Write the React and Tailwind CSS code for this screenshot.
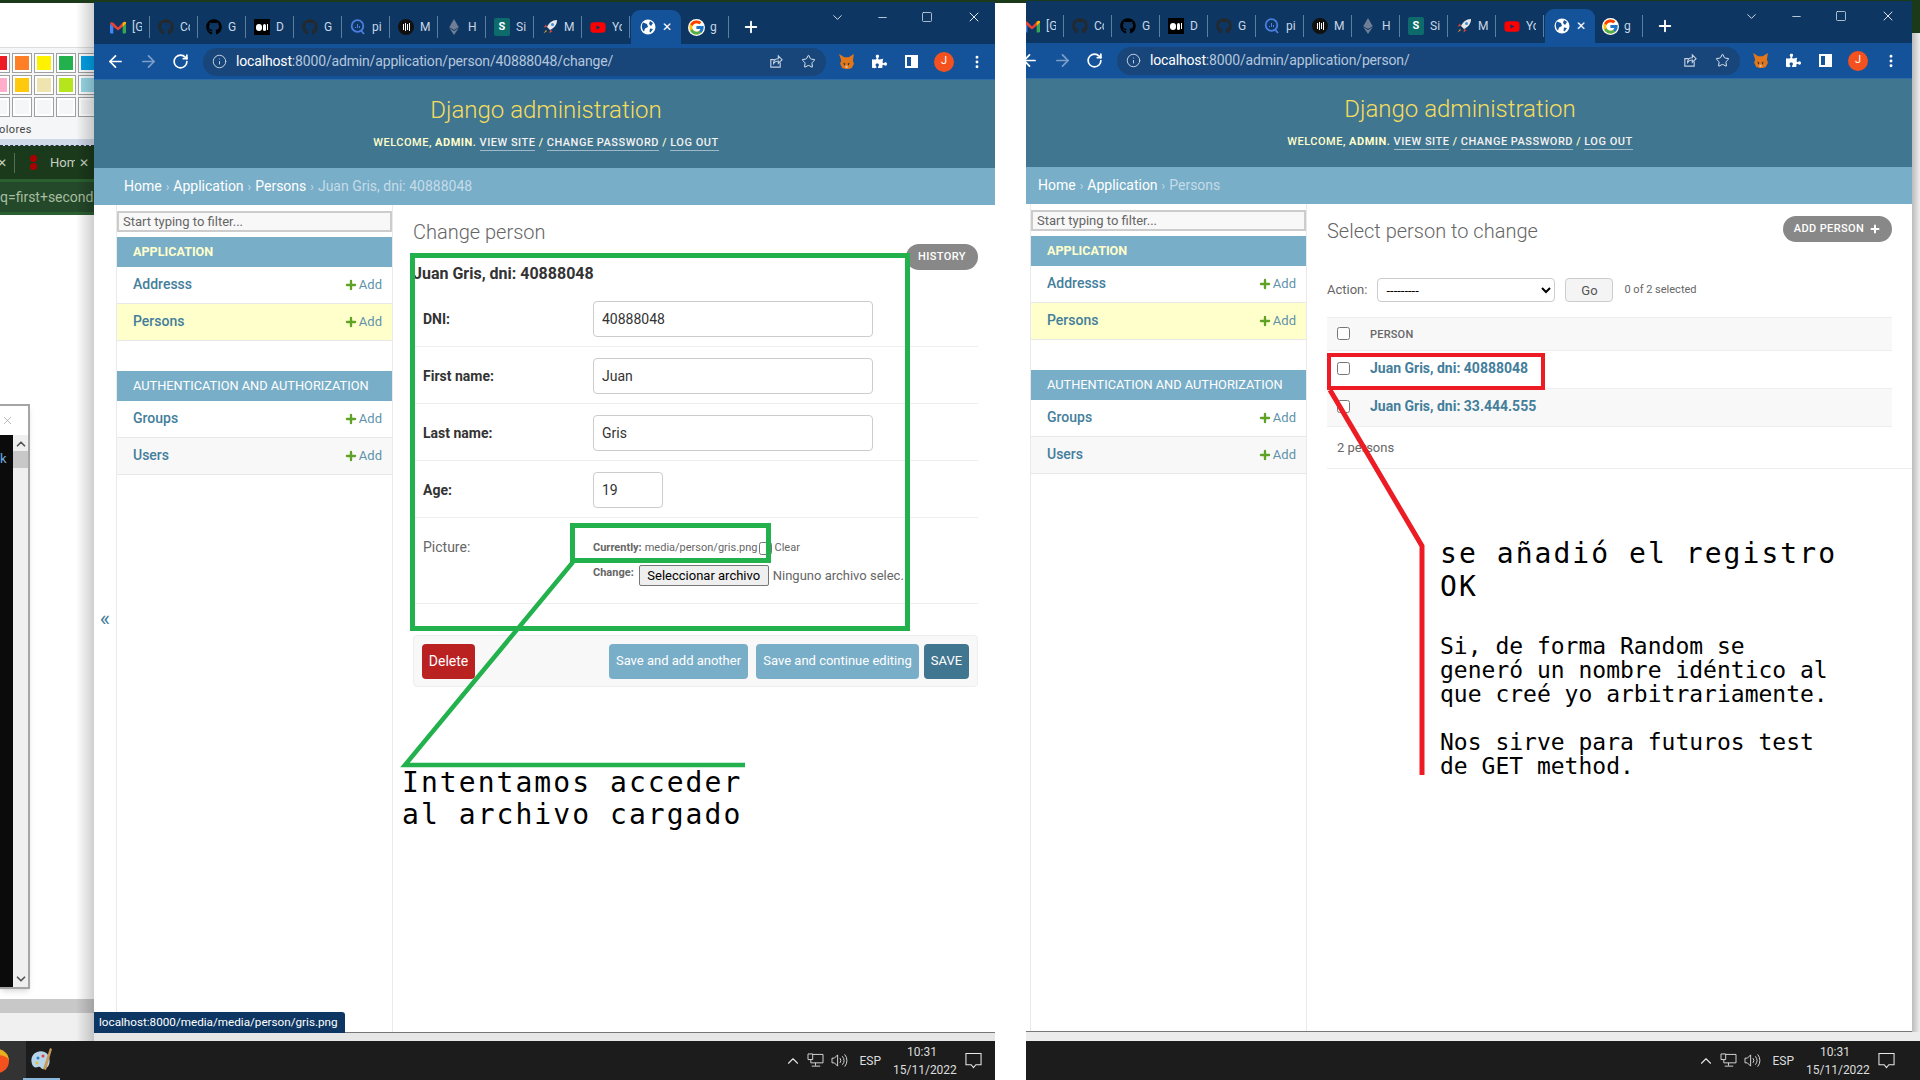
import React from "react";
import { FaGithub, FaEthereum, FaYoutube, FaPuzzlePiece } from "react-icons/fa";
import { FcGoogle } from "react-icons/fc";
import { ArrowLeft, ArrowRight, RotateCw, Info, Star, ChevronUp, ChevronDown, X, Minus, Square, Plus, MoreVertical } from "lucide-react";

const Gmail = () => (
  <svg viewBox="0 0 24 18" className="w-[16px] h-[13px]">
    <path d="M0 3v13a2 2 0 0 0 2 2h3V8z" fill="#4285f4" />
    <path d="M24 3v13a2 2 0 0 1-2 2h-3V8z" fill="#34a853" />
    <path d="M5 2 12 9l7-7 3-1.500a2 2 0 0 1 2 2.500l-5 5-7 5.500L5 8 0 3A2 2 0 0 1 2 1z" fill="#ea4335" />
    <path d="M19 2l3-1.500a2 2 0 0 1 2 2.500l-5 5z" fill="#fbbc04" />
  </svg>
);
const Medium = () => (
  <div className="w-[16px] h-[16px] bg-black flex items-center justify-center gap-[1px]">
    <span className="w-[6px] h-[7px] rounded-full bg-white" />
    <span className="w-[3px] h-[7px] rounded-full bg-white" />
    <span className="w-[1px] h-[6px] bg-white" />
  </div>
);
const Quant = () => (
  <svg viewBox="0 0 16 16" className="w-[16px] h-[16px]" fill="none" stroke="#4c7fe0" strokeWidth="1.800">
    <circle cx="7.500" cy="7" r="5.800" />
    <path d="M11 11.500l3 3.500" />
    <path d="M5.500 8v1M7.500 5v4M9.500 7v2" strokeWidth="1" />
  </svg>
);
const Bars = () => (
  <div className="w-[16px] h-[16px] rounded-full bg-[#111] flex items-center justify-center gap-[1px]">
    <span className="w-[1px] h-[6px] bg-white" />
    <span className="w-[1px] h-[8px] bg-white" />
    <span className="w-[1px] h-[6px] bg-white" />
    <span className="w-[1px] h-[8px] bg-white" />
  </div>
);
const Teal = () => (
  <div className="w-[16px] h-[18px] rounded-[2px] bg-[#0d6b6b] text-white text-[11px] font-bold flex items-center justify-center">S</div>
);
const Rocket = () => (
  <svg viewBox="0 0 16 16" className="w-[16px] h-[16px]">
    <path d="M15 1c-5 0-8 3-10 7l3 3c4-2 7-5 7-10z" fill="#e8e8e8" />
    <circle cx="10.500" cy="5.500" r="1.500" fill="#3a8fd8" />
    <path d="M5 8 1.500 8.500 4 5.500zM8 11l-.500 3.500 3-2.500z" fill="#e0453a" />
    <path d="M4 11l-2.500 3.500L5 12z" fill="#f5a623" />
  </svg>
);
const Globe = () => (
  <svg viewBox="0 0 16 16" className="w-[16px] h-[16px]">
    <circle cx="8" cy="8" r="7.500" fill="#fff" />
    <path d="M3 3.500 7 5l1 3-3 1.500-1 3A7 7 0 0 1 3 3.500zM10 2l3 2-2 3-2-2zM10 9.500l3 .500-2.500 3.500-1-1z" fill="#14539a" />
  </svg>
);
const GH = () => <FaGithub className="w-[16px] h-[16px] text-[#24292e]" />;
const GHB = () => <FaGithub className="w-[16px] h-[16px] text-black" />;
const tabs = [
  [<Gmail />, "[G"], [<GH />, "Cc"], [<GHB />, "G"], [<Medium />, "D"], [<GH />, "G"], [<Quant />, "pi"],
  [<Bars />, "M"], [<FaEthereum className="w-[16px] h-[16px] text-[#6f7d96]" />, "H"], [<Teal />, "Si"], [<Rocket />, "M"],
  [<FaYoutube className="w-[17px] h-[17px] text-[#ff0000]" />, "Yc"],
];

function TabStrip() {
  return (
    <div className="h-[42px] bg-[#0d3762] flex items-end relative shrink-0 pl-[8px]">
      {tabs.map(([icon, label], i) => (
        <div key={i} className="w-[48px] h-[34px] flex items-center pl-[8px] gap-[6px] text-[#c8d6e5] text-[12px] overflow-hidden border-r border-[#3f6589] my-0 shrink-0 [border-image:linear-gradient(transparent_20%,#5c7fa0_20%,#5c7fa0_80%,transparent_80%)_1]">
          <span className="w-[16px] h-[18px] flex items-center justify-center shrink-0">{icon}</span>
          <span className="w-[10px] overflow-hidden whitespace-nowrap">{label}</span>
        </div>
      ))}
      <div className="w-[50px] h-[34px] bg-[#14539a] rounded-t-[9px] flex items-center pl-[9px] gap-[6px] text-white text-[12px] shrink-0 ml-[1px]">
        <Globe />
        <span>✕</span>
      </div>
      <div className="w-[48px] h-[34px] flex items-center pl-[7px] gap-[5px] text-[#c8d6e5] text-[12px] shrink-0 border-r border-[#3f6589] [border-image:linear-gradient(transparent_20%,#5c7fa0_20%,#5c7fa0_80%,transparent_80%)_1]">
        <FcGoogle className="w-[17px] h-[17px] bg-white rounded-full shrink-0" />
        <span className="w-[10px] overflow-hidden">g</span>
      </div>
      <Plus className="w-[18px] h-[18px] text-white ml-[13px] mb-[8px]" strokeWidth={2.5} />
      <div className="ml-auto self-start flex items-center mt-[7px] text-[#dfe7ef]">
        <ChevronDown className="w-[15px] h-[15px] mr-[31px]" strokeWidth={1.5} />
        <Minus className="w-[13px] h-[13px] mr-[32px]" strokeWidth={1.5} />
        <Square className="w-[12px] h-[12px] mr-[33px]" strokeWidth={1.5} />
        <X className="w-[16px] h-[16px] mr-[16px]" strokeWidth={1.5} />
      </div>
    </div>
  );
}

function Toolbar({ path }) {
  return (
    <div className="h-[36px] bg-[#14539a] flex items-center shrink-0 border-b border-[#2f6aa8]">
      <ArrowLeft className="w-[19px] h-[19px] text-white ml-[12px]" strokeWidth={2.2} />
      <ArrowRight className="w-[19px] h-[19px] text-[#7d9fc8] ml-[14px]" strokeWidth={2.2} />
      <RotateCw className="w-[17px] h-[17px] text-white ml-[14px]" strokeWidth={2.4} />
      <div className="ml-[14px] w-[623px] h-[28px] rounded-[14px] bg-[#18467a] flex items-center pl-[9px] pr-[10px]">
        <Info className="w-[15px] h-[15px] text-[#c3d0df]" strokeWidth={1.6} />
        <span className="ml-[9px] text-[14px] text-white tracking-[-0.16px]">localhost</span>
        <span className="text-[14px] text-[#b4c6dc] tracking-[-0.16px]">{path}</span>
        <svg viewBox="0 0 16 16" className="w-[15px] h-[15px] ml-auto" fill="none" stroke="#c3d0df" strokeWidth="1.200">
          <path d="M13 9v5H3V6h4" />
          <path d="M6 10c0-3 2-5 5-5V2l4 4-4 4V7.500c-2 0-4 1-5 2.500z" />
        </svg>
        <Star className="w-[15px] h-[15px] text-[#dfe7ef] ml-[18px]" strokeWidth={1.6} />
      </div>
      <svg viewBox="0 0 16 16" className="w-[17px] h-[17px] ml-[12px]">
        <path d="M1 1l5 3h4l5-3-1 6 1 3-2 4-3 1H7l-3-1-2-4 1-3z" fill="#e2761b" />
        <path d="M5 9l2 1-1 2zM11 9l-2 1 1 2z" fill="#233447" />
        <path d="M7 12h2v2H7z" fill="#d7c1b3" />
      </svg>
      <FaPuzzlePiece className="w-[15px] h-[15px] text-white ml-[17px]" />
      <div className="w-[13px] h-[13px] border-[2px] border-white ml-[18px] flex justify-end"><span className="w-[5px] bg-white" /></div>
      <div className="w-[20px] h-[20px] rounded-full bg-[#f4511e] text-white text-[11px] flex items-center justify-center ml-[16px]">J</div>
      <MoreVertical className="w-[16px] h-[16px] text-white ml-[15px]" strokeWidth={2.4} />
    </div>
  );
}

function Header({ crumbs, last }) {
  return (
    <>
      <div className="h-[88px] bg-[#417690] shrink-0 flex flex-col items-center">
        <div className="mt-[15px] h-[30px] leading-[30px] text-[24px] font-light text-[#f5dd5d]">Django administration</div>
        <div className="mt-[11px] text-[11px] font-medium text-[#ffc] tracking-[0.5px] uppercase leading-[14px] whitespace-nowrap">
          Welcome, <strong className="font-bold">admin</strong>.{" "}
          <span className="text-[#f2f2f2] border-b border-[#9fb9c8] pb-[1px]">View site</span> /{" "}
          <span className="text-[#f2f2f2] border-b border-[#9fb9c8] pb-[1px]">Change password</span> /{" "}
          <span className="text-[#f2f2f2] border-b border-[#9fb9c8] pb-[1px]">Log out</span>
        </div>
      </div>
      <div className="h-[37px] bg-[#79aec8] shrink-0 flex items-center pl-[30px] text-[14px] text-white">
        {crumbs.map((c) => (
          <React.Fragment key={c}>
            <span>{c}</span>
            <span className="text-[#c4dce8] px-[4px] text-[12px]">›</span>
          </React.Fragment>
        ))}
        <span className="text-[#c4dce8]">{last}</span>
      </div>
    </>
  );
}

function SideRow({ name, active, alt }) {
  return (
    <div className={`h-[37px] border-b border-[#e8e8e8] flex items-center pl-[16px] pr-[10px] pb-[1px] text-[14px] ${active ? "bg-[#ffc]" : alt ? "bg-[#f8f8f8]" : "bg-white"}`}>
      <span className="font-medium text-[#447e9b]">{name}</span>
      <span className="ml-auto flex items-center text-[#5f93ab] text-[13px]">
        <Plus className="w-[14px] h-[14px] text-[#5fa225] mr-[1px]" strokeWidth={4} />
        Add
      </span>
    </div>
  );
}

function Sidebar() {
  return (
    <div className="w-[277px] shrink-0 border-x border-[#eaeaea] pt-[6px] self-stretch bg-white">
      <input readOnly defaultValue="Start typing to filter..." className="w-full h-[21px] bg-[#f8f8f8] border-2 border-[#ccc] pl-[4px] text-[13px] text-[#666] outline-none block" />
      <div className="mt-[5px] h-[30px] bg-[#79aec8] flex items-center pl-[16px] text-[12.600px] font-bold text-[#ffc]">APPLICATION</div>
      <SideRow name="Addresss" />
      <SideRow name="Persons" active />
      <div className="mt-[30px] h-[30px] bg-[#79aec8] flex items-center pl-[16px] text-[12.800px] text-white whitespace-nowrap">AUTHENTICATION AND AUTHORIZATION</div>
      <SideRow name="Groups" />
      <SideRow name="Users" alt />
    </div>
  );
}

function FormRow({ label, value, small }) {
  return (
    <div className="h-[57px] border-b border-[#eee] flex items-center pl-[10px] pt-[2px]">
      <span className="w-[170px] text-[14px] font-bold text-[#333]">{label}</span>
      <input readOnly defaultValue={value} className={`h-[36px] ${small ? "w-[70px]" : "w-[280px]"} border border-[#ccc] rounded-[4px] bg-white px-[8px] text-[14px] text-[#333] outline-none`} />
    </div>
  );
}

function Button({ children, className }) {
  return <div className={`h-[35px] rounded-[4px] text-white flex items-center justify-center ${className}`}>{children}</div>;
}

function ChangeMain() {
  return (
    <div className="flex-1 pl-[20px] pr-[20px] pt-[15px] min-w-0">
      <div className="h-[50px] flex justify-between">
        <h1 className="text-[20px] leading-[24px] font-light text-[#666]">Change person</h1>
        <div className="self-end h-[26px] w-[72px] rounded-[13px] bg-[#888] text-white text-[11px] font-medium tracking-[0.4px] flex items-center justify-center">HISTORY</div>
      </div>
      <div className="-mt-[8px] h-[28px] leading-[24px] text-[16px] font-bold text-[#333]">Juan Gris, dni: 40888048</div>
      <FormRow label="DNI:" value="40888048" />
      <FormRow label="First name:" value="Juan" />
      <FormRow label="Last name:" value="Gris" />
      <FormRow label="Age:" value="19" small />
      <div className="h-[86px] border-b border-[#eee] flex pl-[10px] pt-[20px]">
        <span className="w-[170px] text-[14px] leading-[18px] text-[#666]">Picture:</span>
        <div>
          <div className="h-[18px] mt-[1px] flex items-center text-[11px] text-[#666] whitespace-nowrap">
            <b className="font-bold mr-[3px]">Currently:</b>
            <span className="text-[#666]">media/person/gris.png</span>
            <input type="checkbox" readOnly className="ml-[2px] mr-[2px] m-0 w-[13px] h-[13px]" />
            <span className="text-[#666]">Clear</span>
          </div>
          <div className="mt-[8px] flex items-center whitespace-nowrap">
            <b className="text-[11px] font-bold text-[#666] mr-[5px] -mt-[4px]">Change:</b>
            <div className="h-[21px] w-[130px] border border-[#767676] rounded-[2px] bg-[#efefef] text-[13px] text-black flex items-center justify-center">Seleccionar archivo</div>
            <span className="ml-[4px] text-[13px] text-[#666]">Ninguno archivo selec.</span>
          </div>
        </div>
      </div>
      <div className="mt-[31px] h-[52px] border border-[#eee] rounded-[4px] bg-[#f8f8f8] flex items-center pl-[8px] pr-[8px]">
        <Button className="w-[53px] bg-[#ba2121] text-[14px]">Delete</Button>
        <Button className="w-[139px] bg-[#79aec8] text-[13px] ml-auto">Save and add another</Button>
        <Button className="w-[163px] bg-[#79aec8] text-[13px] ml-[8px]">Save and continue editing</Button>
        <Button className="w-[45px] bg-[#417690] text-[13px] ml-[5px]">SAVE</Button>
      </div>
    </div>
  );
}

function ListMain() {
  return (
    <div className="flex-1 pl-[20px] pr-[20px] pt-[12px] min-w-0">
      <div className="flex justify-between items-start h-[26px]">
        <h1 className="mt-[3px] text-[20px] leading-[24px] font-light text-[#666]">Select person to change</h1>
        <div className="h-[26px] w-[109px] rounded-[13px] bg-[#888] text-white text-[11px] font-medium tracking-[0.4px] flex items-center justify-center gap-[5px]">
          ADD PERSON <Plus className="w-[12px] h-[12px]" strokeWidth={4} />
        </div>
      </div>
      <div className="mt-[36px] h-[24px] flex items-center">
        <span className="text-[13px] text-[#666] mr-[10px]">Action:</span>
        <select className="w-[178px] h-[24px] border border-[#ccc] rounded-[4px] bg-white text-[13px] pl-[4px] text-black">
          <option>---------</option>
        </select>
        <div className="ml-[10px] w-[48px] h-[24px] rounded-[4px] border border-[#ccc] bg-[#f4f4f4] text-[13px] text-[#555] flex items-center justify-center pt-[2px]">Go</div>
        <span className="ml-[11px] text-[11px] text-[#666]">0 of 2 selected</span>
      </div>
      <div className="mt-[15px] h-[34px] bg-[#f8f8f8] border-y border-[#eee] flex items-center pl-[10px]">
        <input type="checkbox" readOnly className="m-0 w-[13px] h-[13px] mb-[2px]" />
        <span className="ml-[20px] text-[11px] font-medium text-[#666] tracking-[0.2px] mt-[2px]">PERSON</span>
      </div>
      <div className="h-[38px] border-b border-[#eee] flex items-center pl-[10px] pb-[2px]">
        <input type="checkbox" readOnly className="m-0 w-[13px] h-[13px]" />
        <span className="ml-[20px] text-[14px] font-bold text-[#447e9b]">Juan Gris, dni: 40888048</span>
      </div>
      <div className="h-[38px] bg-[#f8f8f8] border-b border-[#eee] flex items-center pl-[10px] pb-[2px]">
        <input type="checkbox" readOnly className="m-0 w-[13px] h-[13px]" />
        <span className="ml-[20px] text-[14px] font-bold text-[#447e9b]">Juan Gris, dni: 33.444.555</span>
      </div>
      <div className="h-[42px] border-b border-[#eee] flex items-center pl-[10px] text-[13px] text-[#666] mr-[-20px]">2 persons</div>
    </div>
  );
}

function Browser({ path, crumbs, last, children }) {
  return (
    <div className="w-[904px] h-full flex flex-col bg-white">
      <TabStrip />
      <Toolbar path={path} />
      <Header crumbs={crumbs} last={last} />
      <div className="flex flex-1 min-h-0">
        <div className="w-[22px] shrink-0 flex items-center justify-center">
          <span className="text-[#447e9b] text-[22px] leading-[22px]">«</span>
        </div>
        <Sidebar />
        {children}
      </div>
    </div>
  );
}

const swatches = [
  ["#ed1c24", "#ff7f27", "#fff200", "#22b14c", "#00a2e8"],
  ["#ffaec9", "#ffc90e", "#efe4b0", "#b5e61d", "#99d9ea"],
  ["#f5f6f7", "#f5f6f7", "#f5f6f7", "#f5f6f7", "#f5f6f7"],
];

function Backdrop() {
  return (
    <div className="absolute left-0 top-0 w-[94px] h-[1041px] overflow-hidden bg-white">
      <div className="h-[3px] bg-[#1a3a1a]" />
      <div className="mt-[44px] h-[92px] bg-[#f5f6f7] border-t border-[#ddd] relative overflow-hidden">
        <div className="flex flex-col gap-[2px] pt-[5px] -ml-[10px]">
          {swatches.map((row, i) => (
            <div key={i} className="flex gap-[2px]">
              {row.map((c, j) => (
                <div key={j} className="w-[20px] h-[20px] border border-[#a0a0a0] p-[2px] bg-white shrink-0">
                  <div className="w-full h-full" style={{ background: c }} />
                </div>
              ))}
            </div>
          ))}
        </div>
        <div className="text-[11px] text-[#444] -ml-[1px] mt-[5px] tracking-[0.4px]">olores</div>
      </div>
      <div className="h-[7px] bg-[#cfd9e8] border-b border-dashed border-[#234]" />
      <div className="h-[33px] bg-[#1b3a1b] flex items-center text-[13px] text-[#c8d0c0]">
        <span className="text-[12px] -ml-[3px]">✕</span>
        <span className="w-[1px] h-[20px] bg-[#51704f] ml-[7px]" />
        <span className="flex flex-col gap-[1px] ml-[15px]">
          <span className="w-[7px] h-[7px] rounded-full bg-[#a00]" />
          <span className="w-[7px] h-[7px] rounded-full bg-[#a00]" />
        </span>
        <span className="ml-[13px] w-[25px] overflow-hidden">Hom</span>
        <span className="ml-[4px] text-[12px]">✕</span>
      </div>
      <div className="h-[36px] bg-[#24482a] flex items-center border-y-[3px] border-y-[#2a6030]">
        <span className="text-[14px] text-[#a8bfa0] whitespace-nowrap">q=first+second</span>
      </div>
      <div className="absolute left-0 top-[404px] w-[30px] h-[585px] bg-white border-r-2 border-b-2 border-t-2 border-[#a5a5a5] shadow-md flex flex-col overflow-hidden">
        <div className="h-[29px] flex items-center pl-[1px]"><X className="w-[13px] h-[13px] text-[#999]" strokeWidth={1.2} /></div>
        <div className="flex flex-1">
          <div className="w-[13px] bg-[#0b0b0b] text-[#6fa8dc] text-[13px] leading-[16px] pt-[16px] overflow-hidden">k</div>
          <div className="flex-1 bg-[#efefef] flex flex-col items-center">
            <ChevronUp className="w-[14px] h-[14px] text-[#555] mt-[2px]" strokeWidth={3} />
            <div className="w-full h-[17px] bg-[#c8c8c8] mt-0" />
            <ChevronDown className="w-[14px] h-[14px] text-[#555] mt-auto mb-[1px]" strokeWidth={3} />
          </div>
        </div>
      </div>
      <div className="absolute left-0 top-[999px] w-full h-[14px] bg-[#c8c8c8]" />
      <div className="absolute left-0 top-[1013px] w-full h-[28px] bg-[#f0f0f0]" />
      <div className="absolute right-0 top-0 w-[18px] h-full bg-gradient-to-r from-transparent to-[#00000030]" />
    </div>
  );
}

function TrayIcons() {
  return (
    <>
      <ChevronUp className="w-[18px] h-[18px] text-[#e4e4e4]" strokeWidth={1.5} />
      <svg viewBox="0 0 18 16" className="w-[17px] h-[15px] ml-[5px]" fill="none" stroke="#ddd" strokeWidth="1">
        <path d="M4 1.500h13v9H4zM9 10.500v3M5 14h9" />
        <path d="M1 1h5v6H1z" fill="#1c1c1c" />
      </svg>
      <svg viewBox="0 0 18 16" className="w-[17px] h-[15px] ml-[7px]" fill="none" stroke="#ddd" strokeWidth="1">
        <path d="M1 5.500h2.500L7 2v12L3.500 10.500H1zM9.500 5.500a4 4 0 0 1 0 5M12 3.500a7 7 0 0 1 0 9M14.500 1.500a10 10 0 0 1 0 13" />
      </svg>
      <span className="ml-[11px] text-[12px] text-[#ddd]">ESP</span>
      <div className="ml-[12px] w-[58px] text-center text-[12px] leading-[18px] text-[#ddd]">
        <div>10:31</div>
        <div>15/11/2022</div>
      </div>
      <svg viewBox="0 0 18 18" className="w-[17px] h-[17px] ml-[14px]" fill="none" stroke="#e8e8e8" strokeWidth="1.100">
        <path d="M1 1.500h16v12H11.500L9 16.500 6.500 13.500H1z" />
      </svg>
    </>
  );
}

function Taskbar() {
  return (
    <div className="absolute left-0 top-[1041px] w-[1920px] h-[39px] flex">
      <div className="w-[995px] bg-[#1c1c1c] flex items-center relative overflow-hidden">
        <div className="w-[26px] h-full bg-[#333] shrink-0 flex items-center">
          <div className="w-[24px] h-[24px] rounded-full bg-[#f4511e] -ml-[15px] border-t-[6px] border-t-[#e8b020]" />
        </div>
        <svg viewBox="0 0 24 28" className="w-[24px] h-[28px] ml-[3px]">
          <path d="M4 8c4-5 12-5 15 0s2 13-4 14c-3 1-3-3-6-2s-5 0-6-3-1-6 1-9z" fill="#b8d4e8" />
          <circle cx="9" cy="11" r="1.500" fill="#2d7dd2" />
          <circle cx="14" cy="9" r="1.500" fill="#e04040" />
          <circle cx="8" cy="16" r="1.500" fill="#e0c040" />
          <path d="M21 1l2 1-6 21-3-1z" fill="#c79a5a" />
        </svg>
        <div className="absolute left-[23px] bottom-0 w-[37px] h-[2px] bg-[#8ab8dc]" />
        <div className="ml-auto flex items-center pr-[13px]"><TrayIcons /></div>
      </div>
      <div className="w-[31px] bg-white" />
      <div className="flex-1 bg-[#1c1c1c] flex items-center justify-end pr-[25px]"><TrayIcons /></div>
    </div>
  );
}

export default function App() {
  return (
    <div className="relative w-[1920px] h-[1080px] overflow-hidden bg-white font-['Roboto',sans-serif]">
      <Backdrop />
      <div className="absolute left-[94px] top-[1033px] w-[901px] h-[8px] bg-[#e6e6e6]" />
      <div className="absolute left-[1026px] top-[1032px] w-[894px] h-[9px] bg-[#ececec]" />
      <div className="absolute left-0 top-0 w-[1920px] h-[3px] bg-[#1a3a1a]" />
      <div className="absolute left-[995px] top-[3px] w-[31px] h-[1038px] bg-white" />
      <div className="absolute left-[1912px] top-0 w-[8px] h-[33px] bg-[#1a3a1a]" />
      <div className="absolute left-[1912px] top-[33px] w-[8px] h-[999px] bg-gradient-to-r from-[#bbb] to-[#eee]" />

      <div className="absolute left-[94px] top-[2px] w-[901px] h-[1031px] overflow-hidden border-b border-[#777]">
        <Browser path=":8000/admin/application/person/40888048/change/" crumbs={["Home", "Application", "Persons"]} last="Juan Gris, dni: 40888048">
          <ChangeMain />
        </Browser>
      </div>
      <div className="absolute left-[94px] top-[1012px] w-[251px] h-[21px] bg-[#0d3762] rounded-tr-[3px] flex items-center pl-[5px] text-[11.700px] text-white">localhost:8000/media/media/person/gris.png</div>

      <div className="absolute left-[1026px] top-[1px] w-[886px] h-[1031px] overflow-hidden border-b border-[#777]">
        <div className="-ml-[18px] h-full">
          <Browser path=":8000/admin/application/person/" crumbs={["Home", "Application"]} last="Persons">
            <ListMain />
          </Browser>
        </div>
      </div>

      <Taskbar />

      {/* annotations */}
      <div className="absolute left-[410px] top-[253px] w-[500px] h-[378px] border-[5px] border-[#22b14c]" />
      <div className="absolute left-[570px] top-[523px] w-[201px] h-[40px] border-[5px] border-[#22b14c]" />
      <svg className="absolute left-0 top-0 w-[1920px] h-[1080px] pointer-events-none" viewBox="0 0 1920 1080" fill="none">
        <path d="M573 562 L405 765 L745 765" stroke="#22b14c" strokeWidth="4.500" />
        <path d="M1330 390 L1422 546 L1422 775" stroke="#ed1c24" strokeWidth="5" />
      </svg>
      <div className="absolute left-[1327px] top-[353px] w-[218px] h-[37px] border-[4px] border-[#ed1c24]" />
      <div className="absolute left-[402px] top-[767px] font-['DejaVu_Sans_Mono',monospace] text-[28px] tracking-[2.050px] leading-[32px] text-black whitespace-pre">{"Intentamos acceder\nal archivo cargado"}</div>
      <div className="absolute left-[1440px] top-[537px] font-['DejaVu_Sans_Mono',monospace] text-[28px] tracking-[2.050px] leading-[33px] text-black whitespace-pre">{"se añadió el registro\nOK"}</div>
      <div className="absolute left-[1440px] top-[634px] font-['DejaVu_Sans_Mono',monospace] text-[23px] leading-[24px] text-black whitespace-pre">{"Si, de forma Random se\ngeneró un nombre idéntico al\nque creé yo arbitrariamente.\n\nNos sirve para futuros test\nde GET method."}</div>
    </div>
  );
}
